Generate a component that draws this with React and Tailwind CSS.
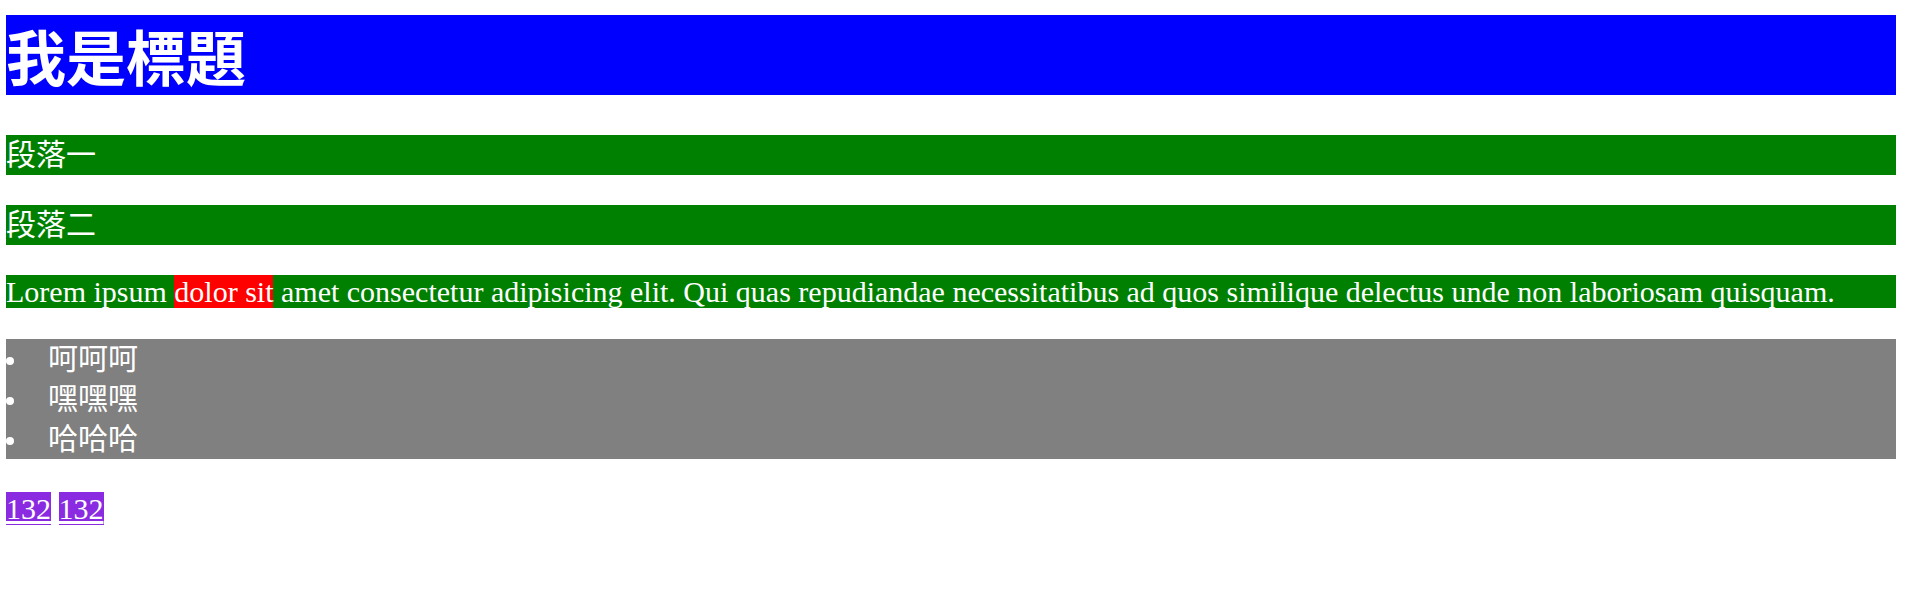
export default function App() {
  const serif = "font-['Liberation_Serif','Noto_Sans_CJK_TC',serif]"
  return (
    <div className={`${serif} bg-white min-h-[597px] pl-[6px] pr-[15px] pt-[15px] text-[30px] text-white`}>
      <h1 className="bg-[#0000ff] font-['Noto_Sans_CJK_TC',sans-serif] text-[60px] font-bold leading-[80px]">
        我是標題
      </h1>
      <p className="mt-[40px] bg-[#008000] leading-[40px]">段落一</p>
      <p className="mt-[30px] bg-[#008000] leading-[40px]">段落二</p>
      <p className="mt-[30px] bg-[#008000] font-['Liberation_Serif',serif] leading-[33px] antialiased">
        Lorem ipsum <span className="bg-[#ff0000]">dolor sit</span> amet consectetur adipisicing elit. Qui quas repudiandae necessitatibus ad quos similique delectus unde non laboriosam quisquam.
      </p>
      <ul className="mt-[31px] bg-[#808080]">
        {['呵呵呵', '嘿嘿嘿', '哈哈哈'].map((t) => (
          <li key={t} className="flex h-[40px] items-center">
            <span className="mt-[4px] h-[8px] w-[8px] shrink-0 rounded-full bg-white" />
            <span className="ml-[34px] leading-[40px]">{t}</span>
          </li>
        ))}
      </ul>
      <p className="mt-[33px] leading-[normal]">
        <a href="#" className="bg-[#8a2be2] underline">132</a>{' '}
        <a href="#" className="bg-[#8a2be2] underline">132</a>
      </p>
    </div>
  )
}
